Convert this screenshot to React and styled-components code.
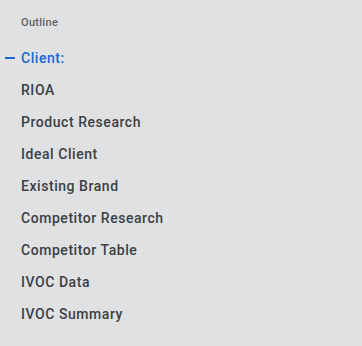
import React from 'react';
import styled, { createGlobalStyle } from 'styled-components';

const GlobalStyle = createGlobalStyle`
  html, body {
    margin: 0;
    padding: 0;
    background: #e0e1e3;
  }
  body {
    font-family: Roboto, "Noto Sans", sans-serif;
  }
`;

const sections = [
  'RIOA',
  'Product Research',
  'Ideal Client',
  'Existing Brand',
  'Competitor Research',
  'Competitor Table',
  'IVOC Data',
  'IVOC Summary',
];

const Panel = styled.nav`
  width: 362px;
  height: 346px;
  box-sizing: border-box;
  background: #e0e1e3;
  padding-top: 15px;
`;

const Title = styled.div`
  padding-left: 21px;
  height: 16px;
  line-height: 16px;
  font-size: 11px;
  font-weight: 500;
  letter-spacing: 0.3px;
  color: #5f6368;
  margin-bottom: 11px;
`;

const List = styled.ul`
  list-style: none;
  margin: 0;
  padding: 0;
`;

const Item = styled.li`
  position: relative;
  height: 32px;
  line-height: 32px;
  padding-left: 21px;
  font-size: 14px;
  font-weight: 500;
  letter-spacing: 0.55px;
  color: ${p => (p.$active ? '#1a66d2' : '#3c4043')};
`;

const Dash = styled.span`
  position: absolute;
  left: 5px;
  top: 15px;
  width: 10px;
  height: 2px;
  background: #1a66d2;
`;

const App = () => (
  <>
    <GlobalStyle />
    <Panel>
      <Title>Outline</Title>
      <List>
        <Item $active>
          <Dash />
          Client:
        </Item>
        {sections.map(name => (
          <Item key={name}>{name}</Item>
        ))}
      </List>
    </Panel>
  </>
);

export default App;
